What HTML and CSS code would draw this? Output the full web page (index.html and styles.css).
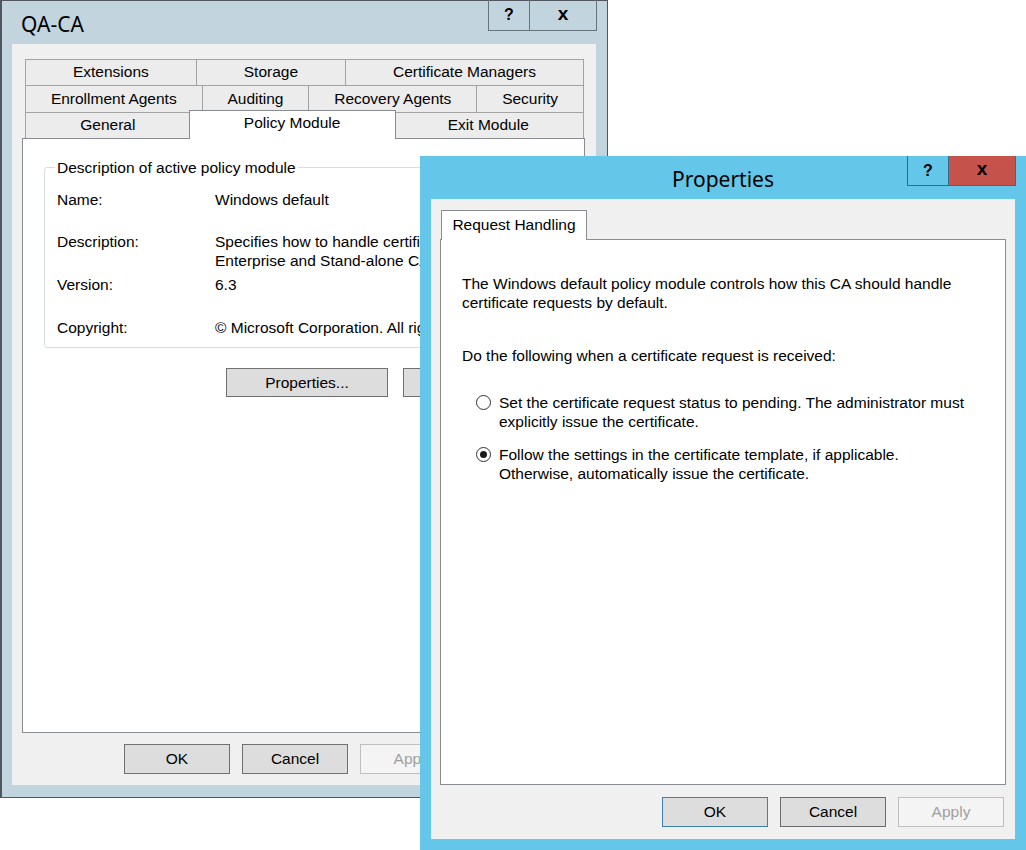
FILE: index.html
```html
<!DOCTYPE html>
<html lang="en">
<head>
<meta charset="utf-8">
<title>QA-CA Properties</title>
<link rel="stylesheet" href="styles.css">
</head>
<body>
<div class="win win-ca">
  <div class="titlebar">
    <div class="title">QA-CA</div>
    <div class="caps">
      <div class="cap cap-help">?</div>
      <div class="cap cap-close">x</div>
    </div>
  </div>
  <div class="panel panel-ca">
    <div class="tabstrip">
      <div class="tabrow row1">
        <div class="tab">Extensions</div>
        <div class="tab">Storage</div>
        <div class="tab">Certificate Managers</div>
      </div>
      <div class="tabrow row2">
        <div class="tab">Enrollment Agents</div>
        <div class="tab">Auditing</div>
        <div class="tab">Recovery Agents</div>
        <div class="tab">Security</div>
      </div>
      <div class="tabrow row3">
        <div class="tab">General</div>
        <div class="tab tab-sel">Policy Module</div>
        <div class="tab">Exit Module</div>
      </div>
    </div>
    <div class="tabpage page-ca">
      <fieldset class="group">
        <legend>Description of active policy module</legend>
        <div class="props">
          <div>Name:</div><div class="val">Windows default</div>
          <div>Description:</div><div class="val">Specifies how to handle certificate requests for<br>Enterprise and Stand-alone CAs.</div>
          <div>Version:</div><div class="val">6.3</div>
          <div>Copyright:</div><div class="val">© Microsoft Corporation. All rights reserved.</div>
        </div>
      </fieldset>
      <div class="actions">
        <button class="btn btn-wide">Properties...</button>
        <button class="btn btn-wide">Select...</button>
      </div>
    </div>
    <div class="dlgbtns dlg-ca">
      <button class="btn">OK</button>
      <button class="btn">Cancel</button>
      <button class="btn btn-dis">Apply</button>
      <button class="btn">Help</button>
    </div>
  </div>
</div>

<div class="win win-prop">
  <div class="titlebar titlebar-center">
    <div></div>
    <div class="title">Properties</div>
    <div class="caps">
      <div class="cap cap-help">?</div>
      <div class="cap cap-close">x</div>
    </div>
  </div>
  <div class="panel panel-prop">
    <div class="tabstrip-single">
      <div class="tab1">Request Handling</div>
    </div>
    <div class="tabpage page-prop">
      <p class="p1">The Windows default policy module controls how this CA should handle<br>certificate requests by default.</p>
      <p class="p2">Do the following when a certificate request is received:</p>
      <div class="option opt1">
        <span class="radio"></span>
        <span>Set the certificate request status to pending. The administrator must<br>explicitly issue the certificate.</span>
      </div>
      <div class="option opt2">
        <span class="radio radio-on"></span>
        <span>Follow the settings in the certificate template, if applicable.<br>Otherwise, automatically issue the certificate.</span>
      </div>
    </div>
    <div class="dlgbtns dlg-prop">
      <button class="btn btn-default">OK</button>
      <button class="btn btn-focus">Cancel</button>
      <button class="btn btn-dis">Apply</button>
    </div>
  </div>
</div>
</body>
</html>
```

FILE: styles.css
```css
html, body {
  margin: 0;
  padding: 0;
}
body {
  width: 1026px;
  height: 850px;
  position: relative;
  overflow: hidden;
  background: #ffffff;
  font-family: "Liberation Sans", Arial, sans-serif;
  font-size: 15.5px;
  color: #000;
}

.win {
  position: absolute;
  display: flex;
  flex-direction: column;
  box-sizing: border-box;
}
.win-ca {
  left: 0;
  top: 0;
  width: 608px;
  height: 798px;
  background: #c2d5de;
  border: 1px solid #50565d;
  border-left-width: 2px;
}
.win-prop {
  left: 420px;
  top: 156px;
  width: 606px;
  height: 694px;
  background: #64c7e9;
}

/* title bars */
.titlebar {
  display: flex;
  height: 43px;
  flex: none;
}
.titlebar-center {
  display: grid;
  grid-template-columns: 1fr auto 1fr;
}
.title {
  font-family: "Noto Sans", "Open Sans", sans-serif;
  font-size: 21px;
  line-height: 28px;
  padding-top: 9px;
  color: #000;
}
.win-ca .title {
  flex: 1;
  padding-left: 19px;
}
.caps {
  display: flex;
  align-self: flex-start;
  justify-self: end;
  margin-right: 10px;
}
.win-ca .caps {
  margin-top: -1px;
}
.cap {
  box-sizing: border-box;
  height: 31px;
  display: flex;
  align-items: center;
  justify-content: center;
  font-family: "Liberation Sans", Arial, sans-serif;
  font-weight: bold;
  border: 1px solid #66747b;
  border-top: none;
}
.cap-help {
  width: 41px;
  border-right: none;
  font-size: 16px;
}
.cap-close {
  width: 68px;
  font-size: 19px;
  padding-bottom: 3px;
}
.win-prop .cap {
  height: 30px;
  border-color: #2f6d88;
}
.win-prop .cap-close {
  background: #c6524c;
  border-color: #2f6d88 #a8403b #a8403b #2f6d88;
}

/* panels */
.panel {
  flex: 1;
  display: flex;
  flex-direction: column;
  background: #f0f0f0;
  min-height: 0;
}
.panel-ca {
  margin: 0 11px 12px 10px;
  padding: 15px 11px 11px 10px;
}
.panel-prop {
  margin: 0 11px 11px 11px;
  padding: 11px 9px 12px 9px;
}

/* multi-row tabs */
.tabstrip {
  margin: 0 1px 0 3px;
  flex: none;
}
.tabrow {
  display: flex;
  height: 26px;
  align-items: stretch;
}
.row2 {
  height: 27px;
}
.tab {
  flex: 1 1 auto;
  box-sizing: border-box;
  border: 1px solid #a3a3a3;
  border-bottom: none;
  margin-left: -1px;
  background: #ececec;
  text-align: center;
  white-space: nowrap;
  line-height: 24px;
}
.row2 .tab {
  line-height: 25px;
}
.tab:first-child {
  margin-left: 0;
}
.tab.tab-sel {
  align-self: flex-start;
  height: 29px;
  margin: -2px -2px 0 -2px;
  padding-top: 1px;
  line-height: 21px;
  background: #ffffff;
  border-color: #898c90;
  position: relative;
  z-index: 1;
}

.tabstrip-single {
  height: 29px;
  flex: none;
  display: flex;
}
.tab1 {
  box-sizing: border-box;
  width: 146px;
  height: 30px;
  margin-left: 1px;
  border: 1px solid #898c90;
  border-bottom: none;
  background: #ffffff;
  text-align: center;
  line-height: 24px;
  padding-top: 2px;
  position: relative;
  z-index: 1;
}

.tabpage {
  flex: 1;
  background: #ffffff;
  border: 1px solid #898c90;
  min-height: 0;
}
.page-ca {
  padding: 19px 21px 0 21px;
}
.page-prop {
  padding: 34px 21px 0 21px;
}

/* group box */
.group {
  margin: 0;
  padding: 13px 12px 10px 12px;
  border: 1px solid #d6dee4;
  border-radius: 3px;
  min-width: 0;
}
.group legend {
  padding: 0 2px;
  margin-left: -2px;
  line-height: 19px;
}
.props {
  display: grid;
  grid-template-columns: 158px 1fr;
  grid-template-rows: 42px 43px 43px 19px;
  line-height: 19px;
}
.val {
  white-space: nowrap;
}

.actions {
  display: flex;
  justify-content: flex-end;
  gap: 15px;
  margin-top: 20px;
  margin-right: -2px;
}

/* buttons */
.btn {
  box-sizing: border-box;
  width: 106px;
  height: 30px;
  padding: 0;
  margin: 0;
  font-family: inherit;
  font-size: inherit;
  color: #000;
  background: #dddddd;
  border: 1px solid #707070;
  border-radius: 0;
  text-align: center;
  line-height: 28px;
}
.btn-wide {
  width: 162px;
  height: 29px;
  line-height: 27px;
}
.btn-dis {
  background: #f4f4f4;
  border-color: #bfbfbf;
  color: #a0a0a0;
}
.btn-default {
  border-color: #3c7fb1;
}
.btn-focus {
  border-color: #6a6a6a;
}
.dlgbtns {
  display: flex;
  justify-content: flex-end;
  gap: 12px;
  margin-top: 11px;
  flex: none;
}
.dlg-ca {
  padding-right: 1px;
}
.dlg-prop {
  margin-top: 12px;
  padding-right: 2px;
}

/* properties content */
.page-prop p {
  margin: 0;
  line-height: 19px;
}
.page-prop .p2 {
  margin-top: 34px;
}
.option {
  display: flex;
  align-items: flex-start;
  gap: 8px;
  margin-left: 14px;
  line-height: 19px;
}
.opt1 {
  margin-top: 28px;
}
.opt2 {
  margin-top: 14px;
}
.radio {
  flex: none;
  box-sizing: border-box;
  width: 15px;
  height: 15px;
  margin-top: 2px;
  border: 1px solid #333333;
  border-radius: 50%;
  background: #ffffff;
  display: flex;
  align-items: center;
  justify-content: center;
}
.radio-on::after {
  content: "";
  width: 7px;
  height: 7px;
  border-radius: 50%;
  background: #1a1a1a;
}
```
